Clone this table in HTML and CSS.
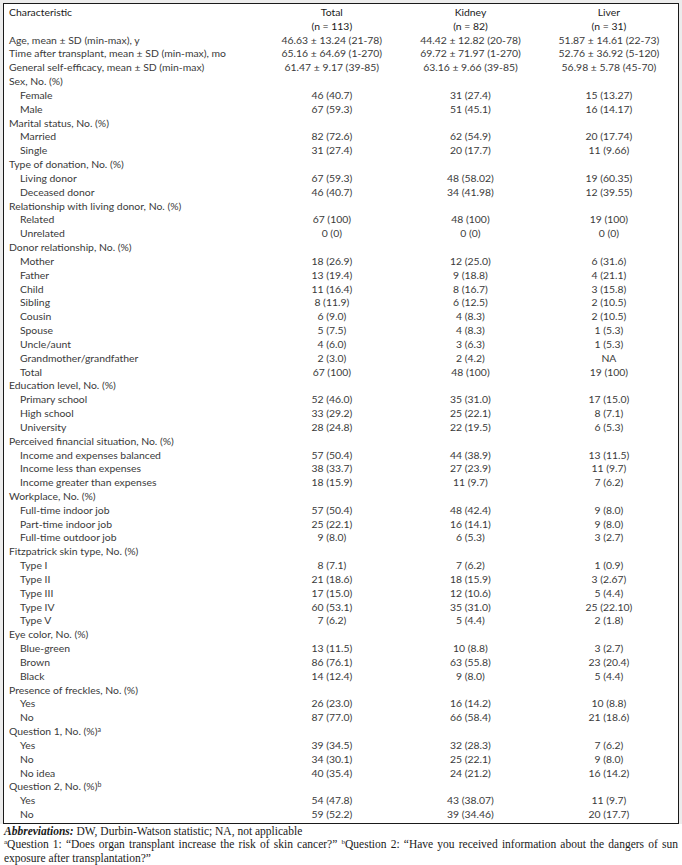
FILE: index.html
```html
<!DOCTYPE html>
<html lang="en">
<head>
<meta charset="utf-8">
<title>Table</title>
<link rel="stylesheet" href="styles.css">
</head>
<body>
<div class="frame">
<table class="data">
<colgroup><col class="c-char"><col class="c-num"><col class="c-num"><col class="c-num"></colgroup>
<thead>
<tr><th class="lbl">Characteristic</th><th>Total</th><th>Kidney</th><th>Liver</th></tr>
<tr><th class="lbl"></th><th>(n = 113)</th><th>(n = 82)</th><th>(n = 31)</th></tr>
</thead>
<tbody>
<tr><td>Age, mean ± SD (min-max), y</td><td>46.63 ± 13.24 (21-78)</td><td>44.42 ± 12.82 (20-78)</td><td>51.87 ± 14.61 (22-73)</td></tr>
<tr><td>Time after transplant, mean ± SD (min-max), mo</td><td>65.16 ± 64.69 (1-270)</td><td>69.72 ± 71.97 (1-270)</td><td>52.76 ± 36.92 (5-120)</td></tr>
<tr><td>General self-efficacy, mean ± SD (min-max)</td><td>61.47 ± 9.17 (39-85)</td><td>63.16 ± 9.66 (39-85)</td><td>56.98 ± 5.78 (45-70)</td></tr>
<tr><td>Sex, No. (%)</td><td></td><td></td><td></td></tr>
<tr class="sub"><td>Female</td><td>46 (40.7)</td><td>31 (27.4)</td><td>15 (13.27)</td></tr>
<tr class="sub"><td>Male</td><td>67 (59.3)</td><td>51 (45.1)</td><td>16 (14.17)</td></tr>
<tr><td>Marital status, No. (%)</td><td></td><td></td><td></td></tr>
<tr class="sub"><td>Married</td><td>82 (72.6)</td><td>62 (54.9)</td><td>20 (17.74)</td></tr>
<tr class="sub"><td>Single</td><td>31 (27.4)</td><td>20 (17.7)</td><td>11 (9.66)</td></tr>
<tr><td>Type of donation, No. (%)</td><td></td><td></td><td></td></tr>
<tr class="sub"><td>Living donor</td><td>67 (59.3)</td><td>48 (58.02)</td><td>19 (60.35)</td></tr>
<tr class="sub"><td>Deceased donor</td><td>46 (40.7)</td><td>34 (41.98)</td><td>12 (39.55)</td></tr>
<tr><td>Relationship with living donor, No. (%)</td><td></td><td></td><td></td></tr>
<tr class="sub"><td>Related</td><td>67 (100)</td><td>48 (100)</td><td>19 (100)</td></tr>
<tr class="sub"><td>Unrelated</td><td>0 (0)</td><td>0 (0)</td><td>0 (0)</td></tr>
<tr><td>Donor relationship, No. (%)</td><td></td><td></td><td></td></tr>
<tr class="sub"><td>Mother</td><td>18 (26.9)</td><td>12 (25.0)</td><td>6 (31.6)</td></tr>
<tr class="sub"><td>Father</td><td>13 (19.4)</td><td>9 (18.8)</td><td>4 (21.1)</td></tr>
<tr class="sub"><td>Child</td><td>11 (16.4)</td><td>8 (16.7)</td><td>3 (15.8)</td></tr>
<tr class="sub"><td>Sibling</td><td>8 (11.9)</td><td>6 (12.5)</td><td>2 (10.5)</td></tr>
<tr class="sub"><td>Cousin</td><td>6 (9.0)</td><td>4 (8.3)</td><td>2 (10.5)</td></tr>
<tr class="sub"><td>Spouse</td><td>5 (7.5)</td><td>4 (8.3)</td><td>1 (5.3)</td></tr>
<tr class="sub"><td>Uncle/aunt</td><td>4 (6.0)</td><td>3 (6.3)</td><td>1 (5.3)</td></tr>
<tr class="sub"><td>Grandmother/grandfather</td><td>2 (3.0)</td><td>2 (4.2)</td><td>NA</td></tr>
<tr class="sub"><td>Total</td><td>67 (100)</td><td>48 (100)</td><td>19 (100)</td></tr>
<tr><td>Education level, No. (%)</td><td></td><td></td><td></td></tr>
<tr class="sub"><td>Primary school</td><td>52 (46.0)</td><td>35 (31.0)</td><td>17 (15.0)</td></tr>
<tr class="sub"><td>High school</td><td>33 (29.2)</td><td>25 (22.1)</td><td>8 (7.1)</td></tr>
<tr class="sub"><td>University</td><td>28 (24.8)</td><td>22 (19.5)</td><td>6 (5.3)</td></tr>
<tr><td>Perceived financial situation, No. (%)</td><td></td><td></td><td></td></tr>
<tr class="sub"><td>Income and expenses balanced</td><td>57 (50.4)</td><td>44 (38.9)</td><td>13 (11.5)</td></tr>
<tr class="sub"><td>Income less than expenses</td><td>38 (33.7)</td><td>27 (23.9)</td><td>11 (9.7)</td></tr>
<tr class="sub"><td>Income greater than expenses</td><td>18 (15.9)</td><td>11 (9.7)</td><td>7 (6.2)</td></tr>
<tr><td>Workplace, No. (%)</td><td></td><td></td><td></td></tr>
<tr class="sub"><td>Full-time indoor job</td><td>57 (50.4)</td><td>48 (42.4)</td><td>9 (8.0)</td></tr>
<tr class="sub"><td>Part-time indoor job</td><td>25 (22.1)</td><td>16 (14.1)</td><td>9 (8.0)</td></tr>
<tr class="sub"><td>Full-time outdoor job</td><td>9 (8.0)</td><td>6 (5.3)</td><td>3 (2.7)</td></tr>
<tr><td>Fitzpatrick skin type, No. (%)</td><td></td><td></td><td></td></tr>
<tr class="sub"><td>Type I</td><td>8 (7.1)</td><td>7 (6.2)</td><td>1 (0.9)</td></tr>
<tr class="sub"><td>Type II</td><td>21 (18.6)</td><td>18 (15.9)</td><td>3 (2.67)</td></tr>
<tr class="sub"><td>Type III</td><td>17 (15.0)</td><td>12 (10.6)</td><td>5 (4.4)</td></tr>
<tr class="sub"><td>Type IV</td><td>60 (53.1)</td><td>35 (31.0)</td><td>25 (22.10)</td></tr>
<tr class="sub"><td>Type V</td><td>7 (6.2)</td><td>5 (4.4)</td><td>2 (1.8)</td></tr>
<tr><td>Eye color, No. (%)</td><td></td><td></td><td></td></tr>
<tr class="sub"><td>Blue-green</td><td>13 (11.5)</td><td>10 (8.8)</td><td>3 (2.7)</td></tr>
<tr class="sub"><td>Brown</td><td>86 (76.1)</td><td>63 (55.8)</td><td>23 (20.4)</td></tr>
<tr class="sub"><td>Black</td><td>14 (12.4)</td><td>9 (8.0)</td><td>5 (4.4)</td></tr>
<tr><td>Presence of freckles, No. (%)</td><td></td><td></td><td></td></tr>
<tr class="sub"><td>Yes</td><td>26 (23.0)</td><td>16 (14.2)</td><td>10 (8.8)</td></tr>
<tr class="sub"><td>No</td><td>87 (77.0)</td><td>66 (58.4)</td><td>21 (18.6)</td></tr>
<tr><td>Question 1, No. (%)<sup>a</sup></td><td></td><td></td><td></td></tr>
<tr class="sub"><td>Yes</td><td>39 (34.5)</td><td>32 (28.3)</td><td>7 (6.2)</td></tr>
<tr class="sub"><td>No</td><td>34 (30.1)</td><td>25 (22.1)</td><td>9 (8.0)</td></tr>
<tr class="sub"><td>No idea</td><td>40 (35.4)</td><td>24 (21.2)</td><td>16 (14.2)</td></tr>
<tr><td>Question 2, No. (%)<sup>b</sup></td><td></td><td></td><td></td></tr>
<tr class="sub"><td>Yes</td><td>54 (47.8)</td><td>43 (38.07)</td><td>11 (9.7)</td></tr>
<tr class="sub"><td>No</td><td>59 (52.2)</td><td>39 (34.46)</td><td>20 (17.7)</td></tr>
</tbody>
</table>
</div>
<div class="notes">
<p class="abbr"><b><i>Abbreviations:</i></b> DW, Durbin-Watson statistic; NA, not applicable</p>
<p class="fn fn-full"><sup>a</sup>Question 1: “Does organ transplant increase the risk of skin cancer?” <sup>b</sup>Question 2: “Have you received information about the dangers of sun</p>
<p class="fn">exposure after transplantation?”</p>
</div>
</body>
</html>
```
FILE: styles.css
```css
html, body {
  margin: 0;
  padding: 0;
  background: #ffffff;
}
.frame {
  background: #ececec;
  padding: 3px 3px 0 3px;
}
.data {
  width: 100%;
  border-collapse: collapse;
  border: 1px solid #1a1a1a;
  background: #ffffff;
  font-family: Lato, "Open Sans", sans-serif;
  font-size: 10.4px;
  color: #3a3a3a;
  table-layout: fixed;
}
.c-char { width: 259px; }
.data thead tr:first-child th { padding-top: 2px; }
.data th, .data td {
  padding: 0;
  height: 13.83px;
  line-height: 13.83px;
  white-space: nowrap;
  text-align: center;
  font-weight: 400;
}
.data th {
  color: #1a1a1a;
}
.data th.lbl {
  text-align: left;
  padding-left: 5px;
}
.data td:first-child {
  text-align: left;
  padding-left: 5px;
}
.data tr.sub td:first-child {
  padding-left: 16px;
}
.data tbody tr:last-child td { padding-bottom: 1px; }
.data sup {
  font-size: 7px;
  line-height: 0;
  vertical-align: 3px;
}
.notes {
  padding: 1px 4px 0 4px;
  font-family: "Liberation Serif", "Times New Roman", serif;
  font-size: 11.5px;
  color: #1a1a1a;
}
.notes p {
  margin: 0;
  line-height: 13.5px;
}
.notes sup {
  font-size: 7px;
  line-height: 0;
  vertical-align: 4px;
}
.fn-full {
  text-align: justify;
  text-align-last: justify;
  white-space: nowrap;
}
```
